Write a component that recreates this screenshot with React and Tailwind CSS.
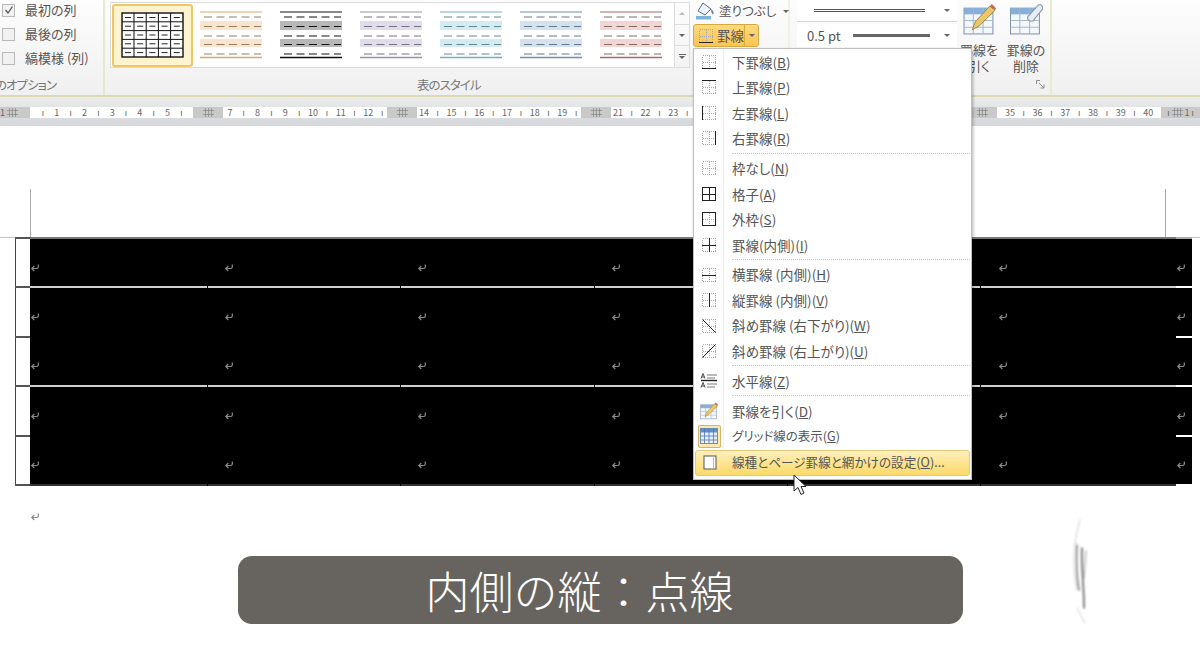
import React from "react";

const THUMBS = [
  { line: "#d9a868", band: "#fbe3cc", dash: "#8f7f6a" },
  { line: "#111111", band: "#b8b8b8", dash: "#111111" },
  { line: "#9a90a8", band: "#e0dcec", dash: "#77727f" },
  { line: "#6fb0bd", band: "#d3ecf3", dash: "#67858c" },
  { line: "#6f8fb0", band: "#d5e1ef", dash: "#66788c" },
  { line: "#a86a68", band: "#f3d5d3", dash: "#7f6b6a" },
];

const MENU = [
  [
    { icon: "b", label: "下罫線(", key: "B" },
    { icon: "t", label: "上罫線(", key: "P" },
    { icon: "l", label: "左罫線(", key: "L" },
    { icon: "r", label: "右罫線(", key: "R" },
  ],
  [
    { icon: "none", label: "枠なし(", key: "N" },
    { icon: "all", label: "格子(", key: "A" },
    { icon: "outer", label: "外枠(", key: "S" },
    { icon: "inner", label: "罫線(内側)(", key: "I" },
  ],
  [
    { icon: "h", label: "横罫線 (内側)(", key: "H" },
    { icon: "v", label: "縦罫線 (内側)(", key: "V" },
    { icon: "d1", label: "斜め罫線 (右下がり)(", key: "W" },
    { icon: "d2", label: "斜め罫線 (右上がり)(", key: "U" },
  ],
  [{ icon: "hr", label: "水平線(", key: "Z" }],
];

function GridIcon({ type }) {
  const has = (k) => type === k;
  const outer = has("all") || has("outer");
  const inner = has("all") || has("inner");
  return (
    <svg width="18" height="18" viewBox="0 0 18 18" fill="none" className="shrink-0" shapeRendering="crispEdges">
      <g stroke="#a8a8a8" strokeDasharray="1 1">
        <rect x="2.5" y="2.5" width="13" height="13" />
        <path d="M9.500 2.500V15.500M2.500 9.500H15.500" />
      </g>
      <g stroke="#222">
        {(has("b") || outer) && <path d="M2 15.500H16" />}
        {(has("t") || outer) && <path d="M2 2.500H16" />}
        {(has("l") || outer) && <path d="M2.500 2V16" />}
        {(has("r") || outer) && <path d="M15.500 2V16" />}
        {(has("h") || inner) && <path d="M2 9.500H16" />}
        {(has("v") || inner) && <path d="M9.500 2V16" />}
        {has("all") && <path d="M9.500 2V16M2 9.500H16" />}
      </g>
      {has("d1") && <path d="M2.500 2.500L15.500 15.500" stroke="#222" shapeRendering="auto" />}
      {has("d2") && <path d="M2.500 15.500L15.500 2.500" stroke="#222" shapeRendering="auto" />}
    </svg>
  );
}

function HrIcon() {
  return (
    <svg width="18" height="18" viewBox="0 0 18 18" fill="none">
      <path d="M1 6.500L3 1.500L5 6.500M1.800 5H4.200M1 15.500L3 10.500L5 15.500M1.800 14H4.200" stroke="#333" strokeWidth="0.9" />
      <path d="M7 3H17M7 6H15M7 12H17M7 15H15" stroke="#777" />
      <path d="M1 8.500H17" stroke="#222" strokeWidth="1.4" />
    </svg>
  );
}

function DrawTableIcon({ size = 18 }) {
  return (
    <svg width={size} height={size} viewBox="0 0 32 32" fill="none" className="shrink-0">
      <rect x="1" y="5" width="28" height="25" fill="#f4f8fc" stroke="#7f93aa" />
      <rect x="1" y="5" width="28" height="6" fill="#88aedb" />
      <path d="M1 17H29M1 23.500H29M10 5V30M19.500 5V30" stroke="#a6b8cc" />
      <path d="M9 26L12 18L26 3L31 7L16 22Z" fill="#ecc76a" stroke="#8d7a45" strokeWidth="0.8" />
      <path d="M26 3L28 1L32 5L31 7Z" fill="#c96a5a" />
    </svg>
  );
}

function EraseTableIcon() {
  return (
    <svg width="35" height="33" viewBox="0 0 33 32" fill="none" className="shrink-0">
      <rect x="1" y="5" width="28" height="25" fill="#f4f8fc" stroke="#7f93aa" />
      <rect x="1" y="5" width="28" height="6" fill="#88aedb" />
      <path d="M1 17H29M1 23.500H29M10 5V30M19.500 5V30" stroke="#a6b8cc" />
      <path d="M18 13L28 2C30 0.500 33 3 32 6L23 17C21 19 16 16 18 13Z" fill="#e8edf3" stroke="#8898ab" />
    </svg>
  );
}

function GridLinesIcon() {
  return (
    <svg width="18" height="16" viewBox="0 0 18 16" fill="none">
      <rect x="0.500" y="0.500" width="17" height="15" fill="#e6effa" stroke="#6f8fb5" />
      <rect x="0.500" y="0.500" width="17" height="4" fill="#5f8fca" />
      <path d="M0.500 8H17.500M0.500 12H17.500M4.500 0.500V15.500M9 0.500V15.500M13.500 0.500V15.500" stroke="#4f78ac" strokeWidth="0.8" />
    </svg>
  );
}

function PageIcon() {
  return (
    <svg width="14" height="15" viewBox="0 0 14 15" fill="none">
      <rect x="1" y="1" width="12" height="13" fill="#fff" stroke="#555" />
      <path d="M10.500 1.500V13.500" stroke="#bbb" />
    </svg>
  );
}

function FillIcon() {
  return (
    <svg width="20" height="18" viewBox="0 0 20 18" fill="none" className="shrink-0">
      <path d="M7 1L15 7L9 13L2 9Z" fill="#eef3f8" stroke="#4f6f8f" />
      <path d="M15 7C18 9 18 12 17 12.500C16 12 15 10 15 7Z" fill="#5f7f9f" />
      <path d="M0 14H15V17.500H0Z" fill="#7fb5d9" />
    </svg>
  );
}

function TableThumb({ line, band, dash }) {
  const ys = [6, 15.5, 25, 33.5, 43];
  return (
    <svg width="62" height="48" viewBox="0 0 62 48" fill="none" className="shrink-0">
      <rect x="0" y="10" width="62" height="9" fill={band} />
      <rect x="0" y="28" width="62" height="8" fill={band} />
      <path d="M0 1H62" stroke={line} strokeWidth="1" />
      {ys.map((y) => (
        <path key={y} d={`M4 ${y}H61`} stroke={dash} strokeDasharray="8 4.500" strokeWidth="1" />
      ))}
      <path d="M0 46.500H62" stroke={line} strokeWidth="1.600" />
    </svg>
  );
}

function GridThumb() {
  return (
    <svg width="63" height="46" viewBox="0 0 63 46" fill="none">
      <rect x="1" y="1" width="61" height="44" fill="#fff" stroke="#111" strokeWidth="1.400" />
      <path d="M1 9.800H62M1 18.600H62M1 27.400H62M1 36.200H62M13 1V45M25.200 1V45M37.400 1V45M49.600 1V45" stroke="#111" />
      {[5.500, 14.200, 23, 31.800, 40.600].map((y) => (
        <path key={y} d={`M4 ${y}H60`} stroke="#222" strokeDasharray="6 6.200" />
      ))}
    </svg>
  );
}

function Check({ checked, label }) {
  return (
    <div className="flex items-center h-[24px] gap-[10px]">
      <span className="flex items-center justify-center w-[13px] h-[13px] border border-[#b9b9b9] bg-[#f1f1f1]">
        {checked && (
          <svg width="10" height="10" viewBox="0 0 10 10" fill="none">
            <path d="M1.500 5L4 8L8.500 1.500" stroke="#555" strokeWidth="1.300" />
          </svg>
        )}
      </span>
      <span className="text-[13px] text-[#555]">{label}</span>
    </div>
  );
}

function Caret() {
  return <span className="block w-0 h-0 border-x-[3px] border-x-transparent border-t-[3px] border-t-[#666]" />;
}

function RulerMark() {
  return (
    <svg width="11" height="9" viewBox="0 0 11 9" fill="none" className="shrink-0">
      <path d="M2.500 0V9M5.500 0V9M8.500 0V9M0 2.500H11M0 6.500H11" stroke="#8d8d8d" strokeWidth="0.800" />
    </svg>
  );
}

function RulerGap({ width }) {
  return (
    <div className={`${width} h-full bg-[#c9c9c9] flex items-center justify-center`}>
      <RulerMark />
    </div>
  );
}

function RulerSeg({ width, pad, nums, lead }) {
  return (
    <div className={`${width} ${pad} h-full bg-white flex items-center overflow-hidden text-[9px] leading-none text-[#666]`}>
      {lead && <span className="w-[13.85px] shrink-0 text-center">ı</span>}
      {nums.map((n) => (
        <React.Fragment key={n}>
          <span className="w-[13.85px] shrink-0 text-center">{n}</span>
          <span className="w-[13.85px] shrink-0 text-center">ı</span>
        </React.Fragment>
      ))}
    </div>
  );
}

function ReturnMark({ color = "#8a8a8a" }) {
  return (
    <svg width="10" height="10" viewBox="0 0 10 10" fill="none">
      <path d="M8 1.500C8.800 3 8.500 5.500 6.500 5.500H2M4.300 3L1.800 5.500L4.300 8" stroke={color} strokeWidth="1.200" />
    </svg>
  );
}

function Rule({ main, right, ticks, outer }) {
  return (
    <div className="flex h-[2px]">
      <div className={`w-[15px] h-px ${outer ? "bg-[#c4c4c4]" : ""}`} />
      <div className="w-[15px] bg-[#555]" />
      <div className={`flex w-[1146px] ${main}`}>
        {ticks &&
          [178, 193, 194, 193, 193].map((w, i) => (
            <div key={i} className="flex shrink-0" style={{ width: w }}>
              <div className="flex-1" />
              <div className="w-px bg-black" />
            </div>
          ))}
      </div>
      <div className={`w-[16px] ${right}`} />
      <div className={`w-[8px] h-px ${outer ? "bg-[#c4c4c4]" : ""}`} />
    </div>
  );
}

function Row() {
  return (
    <div className="flex h-[47.4px] pl-[15px]">
      <div className="w-[15px] border-l border-[#444]" />
      <div className="w-[1162px] bg-black grid grid-cols-[194px_193px_194px_193px_194px_178px_16px] items-center pt-[10px]">
        {[0, 1, 2, 3, 4, 5, 6].map((c) => (
          <div key={c}>
            <ReturnMark />
          </div>
        ))}
      </div>
    </div>
  );
}

function MenuItem({ icon, label, keyName }) {
  return (
    <div className="flex items-center h-[25.500px]">
      <div className="w-[29px] h-full border-r border-[#ececec] flex items-center justify-center">
        {icon === "hr" ? <HrIcon /> : <GridIcon type={icon} />}
      </div>
      <div className="pl-[8px] text-[13.500px] text-[#555]">
        {label}
        <u>{keyName}</u>)
      </div>
    </div>
  );
}

function MenuSep() {
  return (
    <div className="flex h-[4.400px] items-center">
      <div className="w-[29px] h-full border-r border-[#ececec]" />
      <div className="flex-1 ml-[8px] border-t border-dotted border-[#c4c4c4]" />
    </div>
  );
}

function BorderMenu() {
  return (
    <div className="absolute left-[693px] top-[48px] w-[279px] h-[432px] bg-white border border-[#c0c0c0] shadow-[1px_2px_3px_rgba(0,0,0,0.3)] px-[1px]">
      {MENU.map((group, i) => (
        <React.Fragment key={i}>
          {group.map((it) => (
            <MenuItem key={it.key} icon={it.icon} label={it.label} keyName={it.key} />
          ))}
          <MenuSep />
        </React.Fragment>
      ))}
      <div className="flex items-center h-[25.500px]">
        <div className="w-[29px] h-full border-r border-[#ececec] flex items-center justify-center">
          <DrawTableIcon />
        </div>
        <div className="pl-[8px] text-[13.500px] text-[#555]">
          罫線を引く(<u>D</u>)
        </div>
      </div>
      <div className="flex items-center h-[25.500px]">
        <div className="w-[29px] h-full border-r border-[#ececec] flex items-center justify-center">
          <div className="w-[23px] h-[23px] flex items-center justify-center rounded-[2px] border border-[#d5b36a] bg-[#fce7ae]">
            <GridLinesIcon />
          </div>
        </div>
        <div className="pl-[8px] text-[12.500px] text-[#555]">
          グリッド線の表示(<u>G</u>)
        </div>
      </div>
      <div className="flex items-center h-[26px] mt-[0.500px] rounded-[3px] border border-[#e2c878] bg-gradient-to-b from-[#fdf0bd] via-[#fde48f] to-[#fbd96a]">
        <div className="w-[28px] flex items-center justify-center">
          <PageIcon />
        </div>
        <div className="pl-[8px] text-[12.600px] text-[#555] whitespace-nowrap">
          線種とページ罫線と網かけの設定(<u>O</u>)...
        </div>
      </div>
    </div>
  );
}

function Ribbon() {
  return (
    <div className="flex h-[97px] border-b-2 border-[#d9d9b4] bg-gradient-to-b from-[#fdfdfd] to-[#f0f0f0] overflow-hidden">
      <div className="w-[105px] shrink-0 border-r-2 border-[#e7e7cf] pl-[2px] flex flex-col">
        <div className="flex flex-col -mt-[2px]">
          <Check checked label="最初の列" />
          <Check label="最後の列" />
          <Check label="縞模様 (列)" />
        </div>
        <div className="mt-auto mb-[2px] -ml-[7px] text-[12.500px] tracking-[-1px] leading-[16px] text-[#777] whitespace-nowrap">のオプション</div>
      </div>

      <div className="w-[585px] shrink-0 pl-[5px] flex flex-col">
        <div className="flex h-[66px] mt-[2px]">
          <div className="w-[565px] bg-white border border-[#dcdcdc] flex items-center pl-[1px]">
            <div className="w-[81px] h-[63px] shrink-0 rounded-[3px] border-2 border-[#eec76a] bg-[#fdf3cf] flex items-center justify-center">
              <GridThumb />
            </div>
            <div className="flex gap-[18px] pl-[7px]">
              {THUMBS.map((t) => (
                <TableThumb key={t.line} {...t} />
              ))}
            </div>
          </div>
          <div className="w-[15px] flex flex-col border border-l-0 border-[#dcdcdc]">
            <div className="flex-1 flex items-center justify-center border-b border-[#dcdcdc]">
              <span className="w-0 h-0 border-x-[3px] border-x-transparent border-b-[3px] border-b-[#bbb]" />
            </div>
            <div className="flex-1 flex items-center justify-center border-b border-[#dcdcdc]">
              <Caret />
            </div>
            <div className="flex-1 flex flex-col items-center justify-center gap-[1px]">
              <span className="w-[7px] h-px bg-[#666]" />
              <Caret />
            </div>
          </div>
        </div>
        <div className="pl-[307px] pt-[9px] text-[12.500px] tracking-[-1px] leading-[16px] text-[#777]">表のスタイル</div>
      </div>

      <div className="w-[100px] shrink-0 border-r-2 border-[#f0f0e4] pl-[3px]">
        <div className="flex items-center gap-[3px] h-[22px] pl-[3px] text-[12.500px] text-[#555] whitespace-nowrap">
          <FillIcon />
          <span>塗りつぶし</span>
          <span className="ml-[4px]">
            <Caret />
          </span>
        </div>
        <div className="flex items-center w-[66px] h-[23px] mt-[2px] rounded-[3px] border border-[#d8a93f] bg-gradient-to-b from-[#fdd97e] to-[#fbc452]">
          <div className="flex items-center gap-[2px] pl-[3px] w-[51px] h-full border-r border-[#e0ab3c] text-[13.500px] text-[#555]">
            <GridIcon type="b" />
            <span>罫線</span>
          </div>
          <div className="flex-1 flex justify-center">
            <Caret />
          </div>
        </div>
      </div>

      <div className="w-[167px] shrink-0 pl-[7px]">
        <div className="flex items-center h-[22px] pl-[17px] pr-[7px] bg-white border-b border-[#d8d8d8] w-[160px]">
          <span className="w-[111px] h-[3px] border-y border-[#555]" />
          <span className="ml-auto">
            <Caret />
          </span>
        </div>
        <div className="flex items-center h-[23px] mt-[2px] pl-[10px] pr-[7px] bg-white w-[160px] text-[13px] text-[#555] whitespace-nowrap">
          <span>0.5 pt</span>
          <span className="ml-[12px] w-[77px] h-[3px] bg-[#666]" />
          <span className="ml-auto">
            <Caret />
          </span>
        </div>
      </div>

      <div className="w-[95px] shrink-0 flex flex-col border-r-2 border-[#e9e9cc] relative">
        <div className="flex gap-[11px] pl-[5px] pt-[3px] text-[13px] leading-[16px] text-[#555] text-center">
          <div className="w-[34px] flex flex-col items-center whitespace-nowrap">
            <DrawTableIcon size={33} />
            <span className="mt-[6px]">
              罫線を
              <br />
              引く
            </span>
          </div>
          <div className="w-[38px] flex flex-col items-center whitespace-nowrap">
            <EraseTableIcon />
            <span className="mt-[6px]">
              罫線の
              <br />
              削除
            </span>
          </div>
        </div>
        <svg width="9" height="9" viewBox="0 0 9 9" fill="none" className="absolute right-[5px] bottom-[6px]">
          <path d="M0.500 4V0.500H4M3 3L8 8M8 4.500V8H4.500" stroke="#8f8f8f" />
        </svg>
      </div>
      <div className="flex-1" />
    </div>
  );
}

function RulerBar() {
  return (
    <div className="h-[29px] bg-gradient-to-b from-[#ececec] to-[#d4d6da] pt-[10px]">
      <div className="flex h-[11px]">
        <div className="w-[30px] h-full bg-[#c9c9c9] flex items-center gap-[2px] text-[9px] text-[#666]">
          <span>1</span>
          <RulerMark />
        </div>
        <RulerSeg width="w-[163px]" pad="pl-[6px]" lead nums={[1, 2, 3, 4, 5]} />
        <RulerGap width="w-[30px]" />
        <RulerSeg width="w-[164px]" pad="" nums={[7, 8, 9, 10, 11, 12]} />
        <RulerGap width="w-[30px]" />
        <RulerSeg width="w-[164px]" pad="" nums={[14, 15, 16, 17, 18, 19]} />
        <RulerGap width="w-[30px]" />
        <RulerSeg width="w-[356px]" pad="" nums={[21, 22, 23]} />
        <RulerGap width="w-[30px]" />
        <RulerSeg width="w-[164px]" pad="pl-[6px]" nums={[35, 36, 37, 38, 39, 40]} />
        <div className="flex-1 h-full bg-[#c9c9c9] flex items-center justify-center gap-[2px] text-[9px] leading-none text-[#666]">
          <span>ı</span>
          <RulerMark />
          <span>1</span>
          <span>ı</span>
        </div>
      </div>
    </div>
  );
}

export default function App() {
  return (
    <div className="relative w-[1200px] h-[664px] overflow-hidden bg-white font-['Noto_Sans_CJK_JP','Noto_Sans',sans-serif] [font-feature-settings:'palt']">
      <Ribbon />
      <RulerBar />

      <div className="mt-[63px] ml-[30px] w-[1136px] h-[48px] border-x border-[#aaa]" />

      <Rule main="bg-[#777]" right="bg-[#aaa]" outer />
      <Row />
      <Rule main="bg-[#d0d0d0]" right="bg-white" ticks />
      <Row />
      <Rule main="bg-black" right="bg-white" />
      <Row />
      <Rule main="bg-[#d0d0d0]" right="bg-white" ticks />
      <Row />
      <Rule main="bg-black" right="bg-white" />
      <Row />
      <Rule main="bg-[#333]" right="" ticks />

      <div className="pl-[30px] pt-[26px] h-[68px]">
        <ReturnMark />
      </div>

      <div className="flex pl-[238px]">
        <div className="w-[725px] h-[68px] mt-[2px] pr-[42px] rounded-[14px] bg-[#67635f] flex items-center justify-center text-[44px] font-light text-white [font-feature-settings:normal]">
          内側の縦：点線
        </div>
        <svg width="20" height="108" viewBox="0 0 20 108" fill="none" className="ml-[107px] -mt-[36px] blur-[1px]">
          <g stroke="#777" strokeLinecap="round" fill="none">
            <path d="M10 2C3 25 2 50 7 72" stroke="#ccc" />
            <path d="M7 27C6 45 7 60 9 72" strokeWidth="1.500" />
            <path d="M12 30C11 50 14 65 14 90" strokeWidth="1.500" stroke="#555" />
            <path d="M16 33L14 60" stroke="#999" />
            <path d="M7 90L15 105" stroke="#ccc" />
          </g>
        </svg>
      </div>

      <BorderMenu />

      <svg width="16" height="23" viewBox="0 0 16 23" className="absolute left-[793px] top-[474px]">
        <path d="M1 1V17L5 13.500L8 20.500L11 19L8 12.500H13Z" fill="#fff" stroke="#222" strokeWidth="1" />
      </svg>
    </div>
  );
}
